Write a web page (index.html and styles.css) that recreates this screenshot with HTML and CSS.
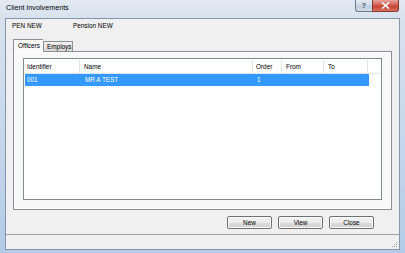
FILE: index.html
```html
<!DOCTYPE html>
<html>
<head>
<meta charset="utf-8">
<link rel="stylesheet" href="styles.css">
</head>
<body>
<div class="window">
  <div class="titlebar">
    <span class="title">Client Involvements</span>
    <div class="caption-buttons">
      <div class="cap-btn help">?</div>
      <div class="cap-btn close">
        <svg width="9" height="7" viewBox="0 0 9 7"><path d="M1 0.5 L8 6.5 M8 0.5 L1 6.5" stroke="#fff" stroke-width="1.6"/></svg>
      </div>
    </div>
  </div>
  <div class="client">
    <div class="info">
      <span class="info-code">PEN NEW</span>
      <span class="info-name">Pension NEW</span>
    </div>
    <div class="tabs">
      <div class="tab active">Officers</div>
      <div class="tab">Employs</div>
    </div>
    <div class="panel">
      <div class="list">
        <div class="list-head">
          <div class="hcell">Identifier</div>
          <div class="hcell">Name</div>
          <div class="hcell">Order</div>
          <div class="hcell">From</div>
          <div class="hcell">To</div>
          <div class="hcell filler"></div>
        </div>
        <div class="list-row selected">
          <div class="cell">001</div>
          <div class="cell">MR A TEST</div>
          <div class="cell">1</div>
          <div class="cell"></div>
          <div class="cell"></div>
        </div>
      </div>
    </div>
    <div class="actions">
      <button class="btn">New</button>
      <button class="btn">View</button>
      <button class="btn">Close</button>
    </div>
    <div class="statusbar">
      <svg class="grip" width="8" height="8" viewBox="0 0 8 8">
        <rect x="6" y="2" width="1" height="1" fill="#a0a0a0"/>
        <rect x="4" y="4" width="1" height="1" fill="#a0a0a0"/>
        <rect x="6" y="4" width="1" height="1" fill="#a0a0a0"/>
        <rect x="2" y="6" width="1" height="1" fill="#a0a0a0"/>
        <rect x="4" y="6" width="1" height="1" fill="#a0a0a0"/>
        <rect x="6" y="6" width="1" height="1" fill="#a0a0a0"/>
      </svg>
    </div>
  </div>
  <div class="bottom-frame"></div>
</div>
</body>
</html>
```
FILE: styles.css
```css
html, body {
  margin: 0;
  padding: 0;
}
body {
  width: 405px;
  height: 253px;
  overflow: hidden;
  font-family: "Liberation Sans", Arial, sans-serif;
  font-size: 6.4px;
  color: #000;
  background: #9fbde0;
}
.window {
  width: 405px;
  height: 253px;
  display: flex;
  flex-direction: column;
  background: linear-gradient(to bottom, #e2e9f2 0px, #d8e2ee 18px, #c8d9ec 120px, #b3cbe8 253px);
}
.titlebar {
  height: 18px;
  display: flex;
  align-items: flex-start;
  flex: none;
}
.title {
  font-size: 7.2px;
  line-height: 8px;
  margin-top: 4px;
  margin-left: 6px;
  color: #000;
}
.caption-buttons {
  margin-left: auto;
  margin-right: 6px;
  display: flex;
}
.cap-btn {
  height: 11px;
  border: 1px solid #6b7a8f;
  border-top: none;
  display: flex;
  align-items: center;
  justify-content: center;
}
.help {
  width: 16px;
  border-radius: 0 0 0 3px;
  border-right: none;
  background: linear-gradient(to bottom, #e4ebf3, #cdd8e5 50%, #bccadb 51%, #d2dde9);
  color: #445566;
  font-size: 7px;
  font-weight: bold;
  line-height: 11px;
}
.close {
  width: 25px;
  border-radius: 0 0 3px 0;
  border-color: #8a3a35;
  background: linear-gradient(to bottom, #e8a59c, #d0574b 50%, #c03a2c 51%, #d9745f);
}
.client {
  flex: none;
  height: 230px;
  margin: 0 5px;
  border: 1px solid #8595ab;
  background: #f0f0f0;
  display: flex;
  flex-direction: column;
}
.info {
  display: grid;
  grid-template-columns: 61px auto;
  padding: 3px 0 0 6px;
  line-height: 8px;
  height: 8px;
}
.tabs {
  margin-top: 9px;
  padding-left: 7px;
  height: 13px;
  margin-bottom: -1px;
  display: flex;
  align-items: flex-start;
  position: relative;
  z-index: 1;
}
.tab {
  box-sizing: border-box;
  height: 10px;
  margin-top: 2px;
  line-height: 9px;
  padding: 0 3px;
  width: 30px;
  border: 1px solid #8c8e94;
  border-bottom: none;
  background: linear-gradient(to bottom, #f2f2f2, #e3e3e3 50%, #d9d9d9);
}
.tab.active {
  height: 13px;
  margin-top: 0;
  padding: 1px 4px 0 4px;
  line-height: 10px;
  background: #f8f8f8;
  border-right: none;
}
.panel {
  box-sizing: border-box;
  height: 159px;
  margin: 0 7px;
  border: 1px solid #8c8e94;
  background: #f8f8f8;
  box-shadow: inset 0 0 0 1px #ffffff;
  padding: 6px 9px 0 9px;
}
.list {
  box-sizing: border-box;
  height: 142px;
  border: 1px solid #828790;
  background: #fff;
}
.list-head, .list-row {
  display: grid;
  grid-template-columns: 56px 173px 29px 42px 44px 1fr;
}
.list-head {
  margin-top: 1px;
  height: 13px;
  border-bottom: 1px solid #e3e3e3;
  line-height: 13px;
}
.hcell {
  padding-left: 3px;
  border-right: 1px solid #e5e5e5;
  white-space: nowrap;
}
.hcell:nth-child(2), .hcell:nth-child(4), .hcell:nth-child(5) {
  padding-left: 4px;
}
.hcell.filler {
  border-right: none;
}
.list-row {
  height: 12px;
  line-height: 12px;
  grid-template-columns: 56px 173px 29px 42px 44px;
  width: 344px;
  margin-left: 1px;
}
.list-row.selected {
  background: #3399ff;
  color: #fff;
}
.cell {
  padding-left: 2px;
  white-space: nowrap;
}
.cell:nth-child(2) {
  padding-left: 4px;
}
.cell:nth-child(3) {
  padding-left: 3px;
}
.actions {
  display: flex;
  justify-content: flex-end;
  gap: 6px;
  margin-top: 6px;
  padding-right: 25px;
}
.btn {
  box-sizing: border-box;
  width: 45px;
  height: 13px;
  padding: 0;
  font-family: "Liberation Sans", Arial, sans-serif;
  font-size: 6.4px;
  line-height: 11px;
  color: #000;
  border: 1px solid #707070;
  border-radius: 2px;
  background: linear-gradient(to bottom, #f2f2f2, #ebebeb 50%, #dddddd 51%, #cfcfcf);
  box-shadow: inset 0 0 0 1px #fcfcfc;
}
.statusbar {
  margin-top: auto;
  height: 14px;
  border-top: 1px solid #a0a0a0;
  display: flex;
  justify-content: flex-end;
  align-items: flex-end;
}
.grip {
  display: block;
  margin: 0 1px 1px 0;
}
.bottom-frame {
  flex: 1;
}
```
